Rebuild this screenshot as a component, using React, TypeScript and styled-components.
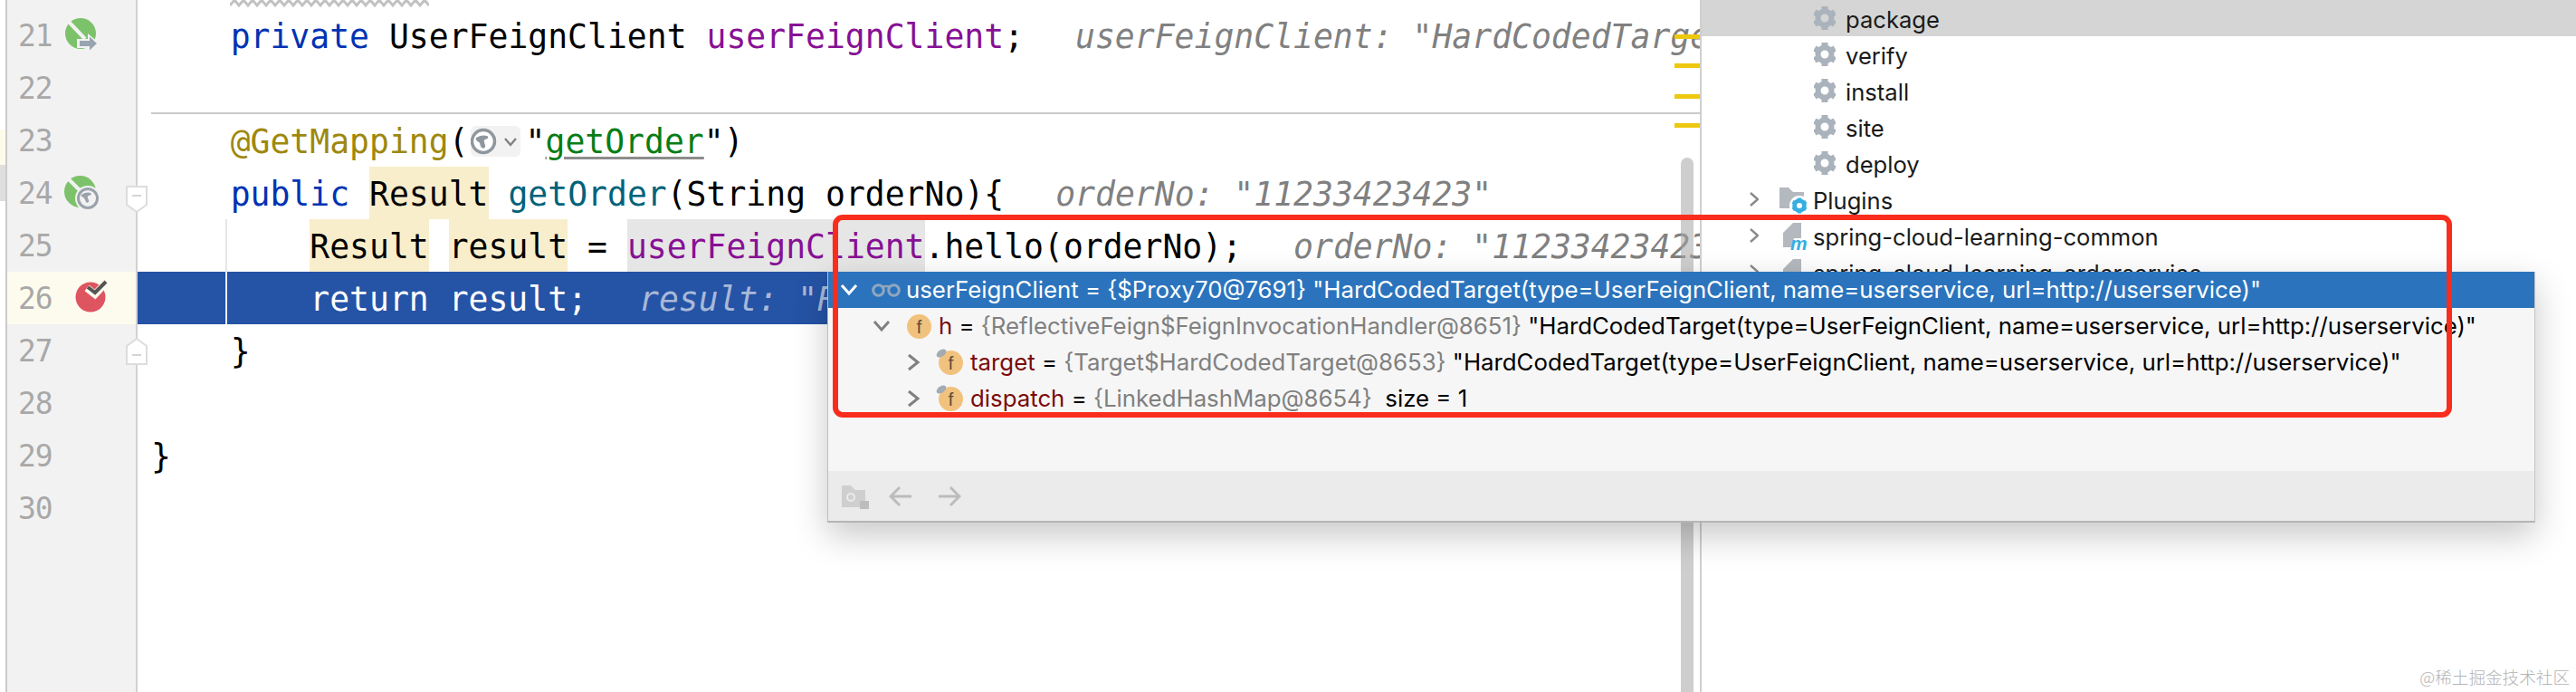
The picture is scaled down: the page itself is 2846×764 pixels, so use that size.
import React from "react";
import styled, { createGlobalStyle } from "styled-components";

const Global = createGlobalStyle`
  html, body { margin: 0; padding: 0; background: #fff; }
`;

const MONO = `"DejaVu Sans Mono", "Liberation Mono", monospace`;
const SANS = `Inter, "Liberation Sans", Arial, sans-serif`;

const Page = styled.div`
  position: relative;
  display: flex;
  width: 2846px;
  height: 764px;
  overflow: hidden;
  background: #fff;
`;

const LeftStrip = styled.div`
  width: 6px;
  flex: none;
  padding-top: 143px;
  display: flex;
  flex-direction: column;
`;
const StripPatch = styled.div<{ $c: string; $h: number }>`
  background: ${(p) => p.$c};
  height: ${(p) => p.$h}px;
`;

const Gutter = styled.div`
  position: relative;
  z-index: 2;
  flex: none;
  width: 146px;
  box-sizing: border-box;
  padding-top: 10px;
  background: #f2f2f2;
  border-left: 2px solid #cbcbcb;
  border-right: 2px solid #d2d2d2;
`;
const GutterRow = styled.div<{ $active?: boolean }>`
  position: relative;
  display: flex;
  align-items: center;
  height: 58px;
  padding-left: 12px;
  background: ${(p) => (p.$active ? "#fdfbee" : "transparent")};
`;
const LineNo = styled.span`
  width: 37px;
  margin-right: 15px;
  padding-top: 2px;
  letter-spacing: -1px;
  font: 33px/58px ${MONO};
  color: #a8a8a8;
`;
const GutterIcon = styled.svg`
  width: 48px;
  height: 40px;
  overflow: visible;
`;
const FoldMark = styled.svg<{ $top: number }>`
  position: absolute;
  left: 131px;
  top: ${(p) => p.$top}px;
  width: 24px;
  height: 30px;
`;

const Editor = styled.div`
  position: relative;
  flex: none;
  width: 1726px;
  overflow: hidden;
`;
const Squiggle = styled.svg`
  display: block;
  width: 220px;
  height: 10px;
  margin-left: 102px;
`;
const CodeRow = styled.div<{ $selected?: boolean; $divider?: boolean; $guide?: boolean }>`
  position: relative;
  height: 58px;
  padding-left: 15px;
  font: 36.4px/62px ${MONO};
  white-space: pre;
  color: ${(p) => (p.$selected ? "#fff" : "#000")};
  background: ${(p) => (p.$selected ? "#2553a5" : "transparent")};
  ${(p) =>
    p.$divider &&
    `&::after { content: ""; position: absolute; left: 15px; right: 0; bottom: 0; height: 2px; background: #c9c9c9; }`}
  ${(p) =>
    p.$guide &&
    `&::before { content: ""; position: absolute; left: 97px; top: 0; bottom: 0; width: 2px; background: ${
      p.$selected ? "#e9edf5" : "#e6e6e6"
    }; }`}
`;
const Kw = styled.span`color: #0033b3;`;
const Field = styled.span`color: #871094;`;
const Method = styled.span`color: #00627a;`;
const Anno = styled.span`color: #9e880d;`;
const Str = styled.span`
  color: #067d17;
  text-decoration: underline;
  text-decoration-color: #8c8c8c;
  text-decoration-thickness: 3px;
  text-underline-offset: 4px;
`;
const Mark = styled.span<{ $bg: string }>`
  display: inline-block;
  height: 58px;
  background: ${(p) => p.$bg};
`;
const Hint = styled.span<{ $selected?: boolean }>`
  font-style: italic;
  margin-left: 57px;
  color: ${(p) => (p.$selected ? "#a8b9d8" : "#808080")};
`;
const InlayChip = styled.span`
  display: inline-flex;
  align-items: center;
  vertical-align: middle;
  box-sizing: border-box;
  width: 55px;
  height: 34px;
  margin: -6px 6px 0 2px;
  border-radius: 6px;
  background: #f2f2f2;
`;
const ScrollThumb = styled.div`
  position: absolute;
  top: 174px;
  bottom: 0;
  right: 7px;
  width: 14px;
  border-radius: 8px 8px 0 0;
  background: rgba(165, 165, 165, 0.55);
`;
const StripeMark = styled.div<{ $top: number }>`
  position: absolute;
  right: 0;
  top: ${(p) => p.$top}px;
  width: 28px;
  height: 5px;
  background: #eec80f;
`;

const ToolPanel = styled.div`
  flex: 1;
  border-left: 2px solid #cfcfcf;
  font: 25.6px/40px ${SANS};
  color: #1a1a1a;
`;
const TreeRow = styled.div<{ $indent: number; $selected?: boolean }>`
  display: flex;
  align-items: center;
  height: 40px;
  padding-left: ${(p) => p.$indent}px;
  background: ${(p) => (p.$selected ? "#d5d5d5" : "transparent")};
  white-space: pre;
`;
const TreeLabel = styled.span`
  padding-top: 3px;
`;
const GearIcon = styled.svg`
  width: 24px;
  height: 26px;
  margin-right: 11px;
  flex: none;
`;
const TreeChevron = styled.svg`
  width: 10px;
  height: 16px;
  margin-right: 23px;
  flex: none;
`;
const NodeIcon = styled.svg`
  width: 33px;
  height: 34px;
  margin-right: 4px;
  flex: none;
  overflow: visible;
`;

const Popup = styled.div`
  position: absolute;
  z-index: 5;
  left: 914px;
  top: 300px;
  width: 1887px;
  height: 277px;
  box-sizing: border-box;
  display: flex;
  flex-direction: column;
  background: #f6f6f6;
  border-left: 1px solid #bdbdbd;
  border-right: 1px solid #c4c4c4;
  border-bottom: 2px solid #b5b5b5;
  box-shadow: 0 14px 36px rgba(0, 0, 0, 0.22);
  font: 25.8px/40px ${SANS};
  color: #000;
`;
const PopupBody = styled.div`
  flex: 1;
`;
const VarRow = styled.div<{ $indent: number; $selected?: boolean }>`
  display: flex;
  align-items: center;
  height: 40px;
  padding-left: ${(p) => p.$indent}px;
  white-space: pre;
  color: ${(p) => (p.$selected ? "#fff" : "#000")};
  background: ${(p) => (p.$selected ? "#2b74bd" : "transparent")};
`;
const ChevronBox = styled.svg<{ $gap: number }>`
  width: 20px;
  height: 20px;
  margin-right: ${(p) => p.$gap}px;
  flex: none;
`;
const Glasses = styled.svg`
  width: 32px;
  height: 16px;
  margin-right: 6px;
  flex: none;
`;
const FieldIcon = styled.svg`
  width: 27px;
  height: 27px;
  margin-right: 8px;
  flex: none;
  overflow: visible;
`;
const VarName = styled.span`color: #7b0a0a;`;
const Ref = styled.span`color: #808080;`;
const PopupFooter = styled.div`
  flex: none;
  height: 55px;
  display: flex;
  align-items: center;
  padding-left: 15px;
  background: #ebebeb;
`;
const FooterIcon = styled.svg<{ $w: number; $gap: number }>`
  width: ${(p) => p.$w}px;
  height: 28px;
  margin-right: ${(p) => p.$gap}px;
  flex: none;
`;

const Annotation = styled.div`
  position: absolute;
  z-index: 6;
  left: 920px;
  top: 237px;
  width: 1789px;
  height: 224px;
  box-sizing: border-box;
  border: 6px solid #f92d1e;
  border-radius: 11px;
`;
const Watermark = styled.div`
  position: absolute;
  z-index: 7;
  right: 7px;
  bottom: 6px;
  font: 300 18.6px/22px "Noto Sans CJK SC", "Noto Sans", sans-serif;
  color: #b4b4b4;
`;

const Gear = () => (
  <GearIcon viewBox="0 0 24 26">
    <g fill="#aab3bb">
      {[0, 60, 120, 180, 240, 300].map((a) => (
        <rect key={a} x="8.500" y="0" width="7" height="6" transform={`rotate(${a} 12 13)`} />
      ))}
    </g>
    <circle cx="12" cy="13" r="7.500" fill="none" stroke="#aab3bb" strokeWidth="6" />
  </GearIcon>
);
const Chev = () => (
  <TreeChevron viewBox="0 0 10 16">
    <path d="M1 1l8 7-8 7" fill="none" stroke="#8a8a8a" strokeWidth="2.400" />
  </TreeChevron>
);
const Module = () => (
  <NodeIcon viewBox="0 0 33 34">
    <path d="M15 3h9v17H16l-2 10H4V14z" fill="#b3b9be" />
    <text x="12" y="33" fontFamily={`"Liberation Sans", sans-serif`} fontStyle="italic" fontWeight="700" fontSize="21" fill="#35aee2">
      m
    </text>
  </NodeIcon>
);
const Caret = ({ open, color, gap, width = 3 }: { open: boolean; color: string; gap: number; width?: number }) => (
  <ChevronBox viewBox="0 0 20 20" $gap={gap}>
    <path d={open ? "M2 5l8 9 8-9" : "M5 2l10 8-10 8"} fill="none" stroke={color} strokeWidth={width} />
  </ChevronBox>
);
const FieldBadge = ({ pinned }: { pinned?: boolean }) => (
  <FieldIcon viewBox="0 0 27 27">
    <circle cx="13.500" cy="13.500" r="13.500" fill="#f1c27e" />
    {pinned && <ellipse cx="3" cy="3" rx="6" ry="3.600" transform="rotate(-35 3 3)" fill="#a3abb3" />}
    <text x="13.500" y="21" textAnchor="middle" fontFamily={`"Liberation Sans", sans-serif`} fontSize="21" fill="#5b4f3c">
      f
    </text>
  </FieldIcon>
);

const CARD = '"HardCodedTarget(type=UserFeignClient, name=userservice, url=http://userservice)"';

export default function App() {
  return (
    <Page>
      <Global />
      <LeftStrip>
        <StripPatch $c="#fdfbe9" $h={39} />
        <StripPatch $c="#dedede" $h={40} />
      </LeftStrip>
      <Gutter>
        <GutterRow>
          <LineNo>21</LineNo>
          <GutterIcon viewBox="0 0 48 40">
            <circle cx="17" cy="18" r="17" fill="#7cc26a" />
            <path d="M3 4L22 24" stroke="#f2f2f2" strokeWidth="4" />
            <path d="M13 24h12v-6l13 11-13 11v-6H13z" fill="#f2f2f2" />
            <path d="M16 26h11v-4.500l8 7.500-8 7.500V32H16z" fill="#98a4b0" />
          </GutterIcon>
        </GutterRow>
        <GutterRow>
          <LineNo>22</LineNo>
        </GutterRow>
        <GutterRow>
          <LineNo>23</LineNo>
        </GutterRow>
        <GutterRow>
          <LineNo>24</LineNo>
          <GutterIcon viewBox="0 0 48 40">
            <circle cx="16.500" cy="18.500" r="17.500" fill="#7cc26a" />
            <path d="M4 5L17 18" stroke="#f2f2f2" strokeWidth="4" />
            <circle cx="25" cy="26" r="14" fill="#f2f2f2" />
            <circle cx="25" cy="26" r="10.500" fill="#f2f2f2" stroke="#9aa3ab" strokeWidth="3" />
            <path d="M18 22c4-3 8-3 10-2 2 1 0 3-2 3s-1 3 0 5-2 4-3 2-1-4-3-5-3-2-2-3z" fill="#9aa3ab" />
          </GutterIcon>
          <FoldMark $top={21} viewBox="0 0 24 30">
            <path d="M1 1h22v20L12 29 1 21z" fill="#fff" stroke="#dcdcdc" strokeWidth="2" />
            <path d="M7 11h10" stroke="#d4d4d4" strokeWidth="2" />
          </FoldMark>
        </GutterRow>
        <GutterRow>
          <LineNo>25</LineNo>
        </GutterRow>
        <GutterRow $active>
          <LineNo>26</LineNo>
          <GutterIcon viewBox="0 0 48 40">
            <circle cx="28" cy="19" r="16.500" fill="#de5460" />
            <path d="M24 9l9 7L46 2" fill="none" stroke="#fdfbee" strokeWidth="8" />
            <path d="M25 8l8 6L45 2" fill="none" stroke="#555" strokeWidth="4" />
          </GutterIcon>
        </GutterRow>
        <GutterRow>
          <LineNo>27</LineNo>
          <FoldMark $top={15} viewBox="0 0 24 30">
            <path d="M1 29h22V9L12 1 1 9z" fill="#fff" stroke="#dcdcdc" strokeWidth="2" />
            <path d="M7 19h10" stroke="#d4d4d4" strokeWidth="2" />
          </FoldMark>
        </GutterRow>
        <GutterRow>
          <LineNo>28</LineNo>
        </GutterRow>
        <GutterRow>
          <LineNo>29</LineNo>
        </GutterRow>
        <GutterRow>
          <LineNo>30</LineNo>
        </GutterRow>
      </Gutter>
      <Editor>
        <Squiggle viewBox="0 0 220 10">
          <polyline
            fill="none"
            stroke="#c2c2c2"
            strokeWidth="3"
            points={Array.from({ length: 45 }, (_, i) => `${i * 5},${i % 2 ? 0 : 6}`).join(" ")}
          />
        </Squiggle>
        <CodeRow>
          {"    "}
          <Kw>private</Kw> UserFeignClient <Field>userFeignClient</Field>;
          <Hint>userFeignClient: "HardCodedTarget(type=</Hint>
        </CodeRow>
        <CodeRow $divider />
        <CodeRow>
          {"    "}
          <Anno>@GetMapping</Anno>(
          <InlayChip>
            <svg width="55" height="34" viewBox="0 0 55 34">
              <circle cx="14" cy="17" r="12.500" fill="#fff" stroke="#8f979e" strokeWidth="3.500" />
              <path d="M6 13c5-3 9-3 12-2s0 4-2 4-1 3 0 6-2 5-4 3-1-5-3-6-4-3-3-5z" fill="#8f979e" />
              <path d="M38 14l6 7 6-7" fill="none" stroke="#808080" strokeWidth="2.400" />
            </svg>
          </InlayChip>
          "<Str>getOrder</Str>")
        </CodeRow>
        <CodeRow>
          {"    "}
          <Kw>public</Kw> <Mark $bg="#f8eecb">Result</Mark> <Method>getOrder</Method>(String orderNo){"{"}
          <Hint>orderNo: "11233423423"</Hint>
        </CodeRow>
        <CodeRow $guide>
          {"        "}
          <Mark $bg="#f8eecb">Result</Mark> <Mark $bg="#f8eecb">result</Mark> ={" "}
          <Mark $bg="#e6e6e6">
            <Field>userFeignClient</Field>
          </Mark>
          .hello(orderNo);
          <Hint>orderNo: "11233423423"</Hint>
        </CodeRow>
        <CodeRow $selected $guide>
          {"        "}return result;
          <Hint $selected>result: "Result</Hint>
        </CodeRow>
        <CodeRow>{"    }"}</CodeRow>
        <CodeRow />
        <CodeRow>{"}"}</CodeRow>
        <CodeRow />
        <ScrollThumb />
        <StripeMark $top={38} />
        <StripeMark $top={70} />
        <StripeMark $top={104} />
        <StripeMark $top={136} />
      </Editor>
      <ToolPanel>
        <TreeRow $indent={124} $selected>
          <Gear />
          <TreeLabel>package</TreeLabel>
        </TreeRow>
        <TreeRow $indent={124}>
          <Gear />
          <TreeLabel>verify</TreeLabel>
        </TreeRow>
        <TreeRow $indent={124}>
          <Gear />
          <TreeLabel>install</TreeLabel>
        </TreeRow>
        <TreeRow $indent={124}>
          <Gear />
          <TreeLabel>site</TreeLabel>
        </TreeRow>
        <TreeRow $indent={124}>
          <Gear />
          <TreeLabel>deploy</TreeLabel>
        </TreeRow>
        <TreeRow $indent={53}>
          <Chev />
          <NodeIcon viewBox="0 0 33 34">
            <path d="M0 4h10l5 5h12v18H0z" fill="#b3b9be" />
            <circle cx="22" cy="24" r="11" fill="#fff" />
            <circle cx="22" cy="24" r="5.500" fill="none" stroke="#35aee2" strokeWidth="4.500" />
            {[0, 60, 120].map((a) => (
              <rect key={a} x="20" y="15.500" width="4" height="17" fill="#35aee2" transform={`rotate(${a} 22 24)`} />
            ))}
            <circle cx="22" cy="24" r="3" fill="#fff" />
          </NodeIcon>
          <TreeLabel>Plugins</TreeLabel>
        </TreeRow>
        <TreeRow $indent={53}>
          <Chev />
          <Module />
          <TreeLabel>spring-cloud-learning-common</TreeLabel>
        </TreeRow>
        <TreeRow $indent={53}>
          <Chev />
          <Module />
          <TreeLabel>spring-cloud-learning-orderservice</TreeLabel>
        </TreeRow>
      </ToolPanel>
      <Popup>
        <PopupBody>
          <VarRow $indent={13} $selected>
            <Caret open color="#fff" gap={15} />
            <Glasses viewBox="0 0 32 16">
              <circle cx="7.500" cy="8.500" r="5.800" fill="none" stroke="#90a7bf" strokeWidth="3" />
              <circle cx="24.500" cy="8.500" r="5.800" fill="none" stroke="#90a7bf" strokeWidth="3" />
              <path d="M12 5c2-1.500 6-1.500 8 0" fill="none" stroke="#90a7bf" strokeWidth="2.500" />
            </Glasses>
            {`userFeignClient = {$Proxy70@7691} ${CARD}`}
          </VarRow>
          <VarRow $indent={49}>
            <Caret open color="#808080" gap={18} />
            <FieldBadge />
            <VarName>h</VarName>
            {" = "}
            <Ref>{"{ReflectiveFeign$FeignInvocationHandler@8651}"}</Ref>
            {` ${CARD}`}
          </VarRow>
          <VarRow $indent={84}>
            <Caret open={false} color="#808080" gap={18} />
            <FieldBadge pinned />
            <VarName>target</VarName>
            {" = "}
            <Ref>{"{Target$HardCodedTarget@8653}"}</Ref>
            {` ${CARD}`}
          </VarRow>
          <VarRow $indent={84}>
            <Caret open={false} color="#808080" gap={18} />
            <FieldBadge pinned />
            <VarName>dispatch</VarName>
            {" = "}
            <Ref>{"{LinkedHashMap@8654}"}</Ref>
            {"  size = 1"}
          </VarRow>
        </PopupBody>
        <PopupFooter>
          <FooterIcon viewBox="0 0 30 28" $w={30} $gap={22}>
            <path d="M0 2h10l5 5h11v19H0z" fill="#cfcfcf" />
            <circle cx="10" cy="15" r="4" fill="none" stroke="#ebebeb" strokeWidth="2" />
            <rect x="20" y="19" width="10" height="9" fill="#bdbdbd" />
          </FooterIcon>
          <FooterIcon viewBox="0 0 26 28" $w={26} $gap={28}>
            <path d="M25 14H3M12 4L2 14l10 10" fill="none" stroke="#bcbcbc" strokeWidth="3" />
          </FooterIcon>
          <FooterIcon viewBox="0 0 26 28" $w={26} $gap={0}>
            <path d="M1 14h22M14 4l10 10-10 10" fill="none" stroke="#bcbcbc" strokeWidth="3" />
          </FooterIcon>
        </PopupFooter>
      </Popup>
      <Annotation />
      <Watermark>@稀土掘金技术社区</Watermark>
    </Page>
  );
}
